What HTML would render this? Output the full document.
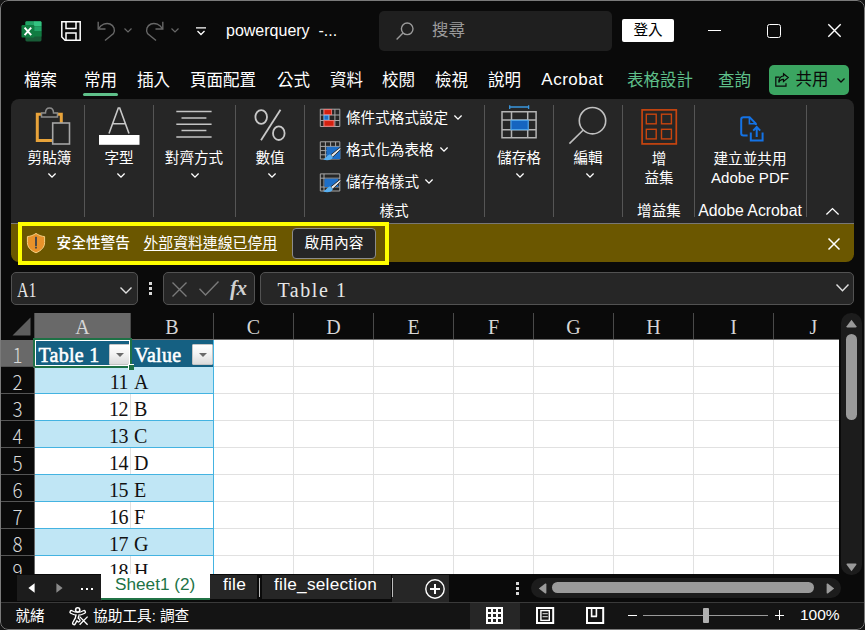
<!DOCTYPE html>
<html lang="zh-Hant">
<head>
<meta charset="utf-8">
<title>powerquery - Excel</title>
<style>
*{box-sizing:border-box;margin:0;padding:0}
html,body{width:865px;height:630px;overflow:hidden;background:#161616}
body{font-family:"Liberation Sans","Noto Sans CJK TC",sans-serif;color:#fff;position:relative}
#win{position:absolute;left:0;top:0;width:864.5px;height:629.5px;background:#0a0a0a;border-radius:8px;overflow:hidden}
#winb{position:absolute;left:0;top:0;width:864.5px;height:629.5px;border:1px solid #7a7a7a;border-radius:8px;pointer-events:none;z-index:50}
.a{position:absolute}
.t{position:absolute;white-space:nowrap;line-height:1}
svg{position:absolute;overflow:visible}
/* tabs */
.tab{position:absolute;top:70px;font-size:16.5px;line-height:20px;white-space:nowrap;color:#fff}
.tab.g{color:#5fc08a}
/* ribbon */
#ribbon{position:absolute;left:11px;top:99px;width:843px;height:124px;background:#262626;border-radius:8px 8px 0 0}
.sep{position:absolute;top:105px;width:1px;height:112px;background:#555}
.rl{position:absolute;font-size:14.6px;line-height:18px;white-space:nowrap;color:#fff;text-align:center}
.chev{position:absolute;width:8px;height:5px}
/* message bar */
#msg{position:absolute;left:11px;top:223px;width:843px;height:39px;background:#6b5700;border-top:1px solid #777;border-radius:0 0 8px 8px}
/* grid */
.ser{font-family:"Liberation Serif","Noto Serif CJK SC",serif}
.colh{position:absolute;top:313px;height:26px;font-size:20px;line-height:29.5px;text-align:center;color:#d6d6d6}
.rowh{position:absolute;left:1px;width:33px;height:27px;font-size:20px;line-height:31px;text-align:center;color:#dadada}
.cell{position:absolute;height:27px;font-size:20px;line-height:31.5px;color:#111;white-space:nowrap}
.sx{display:inline-block;transform:scaleY(1.08);transform-origin:50% 60%}
</style>
</head>
<body>
<div id="win">

<!-- ===== title bar ===== -->
<div id="titlebar">
  <!-- excel icon -->
  <svg class="a" style="left:20.5px;top:20.5px" width="21" height="21" viewBox="0 0 21 21">
    <rect x="4.4" y="0.2" width="16.1" height="20.3" rx="1.4" fill="#185c37"/>
    <path d="M5.8 0.2 H12.5 V5.3 H4.4 V1.6 Q4.4 0.2 5.8 0.2 Z" fill="#21a366"/>
    <path d="M12.500 0.2 H19.1 Q20.5 0.2 20.5 1.6 V5.3 H12.5 Z" fill="#33c481"/>
    <rect x="4.4" y="5.3" width="8.1" height="5.1" fill="#107c41"/>
    <rect x="12.5" y="5.3" width="8" height="5.1" fill="#21a366"/>
    <rect x="4.4" y="10.4" width="8.1" height="5.1" fill="#185c37"/>
    <rect x="12.5" y="10.4" width="8" height="5.1" fill="#107c41"/>
    <rect x="0.5" y="4.1" width="12.9" height="12.5" rx="1.2" fill="#107c41"/>
    <path d="M3.6 6.6 L10.2 14.2 M10.2 6.6 L3.6 14.2" stroke="#fff" stroke-width="1.9" fill="none"/>
  </svg>
  <!-- save -->
  <svg class="a" style="left:61px;top:21px" width="20" height="20" viewBox="0 0 20 20" fill="none" stroke="#fff" stroke-width="1.5">
    <path d="M0.8 0.8 H19.2 V19.2 H4 L0.8 16 Z"/>
    <path d="M5 0.8 V7.5 H15 V0.8"/>
    <path d="M5 19 V12 H15 V19"/>
  </svg>
  <!-- undo -->
  <svg class="a" style="left:97px;top:21px" width="19" height="20" viewBox="0 0 19 20" fill="none" stroke="#676767" stroke-width="1.4">
    <path d="M1.2 0.8 V8 H8.5"/>
    <path d="M1.5 7.8 C4 3.5 9 1.5 13 3 C17 4.8 18.5 9 16.5 12.5 L8 19.5"/>
  </svg>
  <svg class="a" style="left:124px;top:28px" width="8" height="5" viewBox="0 0 8 5" fill="none" stroke="#676767" stroke-width="1.2"><path d="M0.5 0.5 L4 4 L7.5 0.5"/></svg>
  <!-- redo -->
  <svg class="a" style="left:145px;top:21px" width="19" height="20" viewBox="0 0 19 20" fill="none" stroke="#676767" stroke-width="1.4">
    <path d="M17.8 0.8 V8 H10.5"/>
    <path d="M17.5 7.8 C15 3.5 10 1.5 6 3 C2 4.8 0.5 9 2.5 12.5 L11 19.5"/>
  </svg>
  <svg class="a" style="left:171px;top:28px" width="8" height="5" viewBox="0 0 8 5" fill="none" stroke="#676767" stroke-width="1.2"><path d="M0.5 0.5 L4 4 L7.5 0.5"/></svg>
  <!-- customize qat -->
  <svg class="a" style="left:196px;top:27px" width="10" height="9" viewBox="0 0 10 9" fill="none" stroke="#fff" stroke-width="1.3"><path d="M0 0.8 H10"/><path d="M1.5 4 L5 7.5 L8.5 4"/></svg>
  <div class="t" style="left:226px;top:21px;font-size:16px;line-height:20px;color:#fff">powerquery&nbsp; -...</div>
  <!-- search -->
  <div class="a" style="left:379px;top:11px;width:233px;height:39.5px;background:#1f1f1f;border-radius:5px"></div>
  <svg class="a" style="left:396px;top:22px" width="18" height="18" viewBox="0 0 18 18" fill="none" stroke="#9a9a9a" stroke-width="1.4"><circle cx="11.2" cy="6.8" r="5.8"/><path d="M7 11 L0.6 17.4"/></svg>
  <div class="t" style="left:432px;top:20px;font-size:16.5px;line-height:20px;color:#9a9a9a">搜尋</div>
  <!-- sign in -->
  <div class="a" style="left:622px;top:19px;width:52px;height:23px;background:#fff;border-radius:2px;color:#000;font-size:14.6px;line-height:23px;text-align:center">登入</div>
  <!-- window controls -->
  <div class="a" style="left:708px;top:30px;width:13px;height:1.4px;background:#fff"></div>
  <div class="a" style="left:767px;top:24px;width:14px;height:14px;border:1.5px solid #fff;border-radius:2.5px"></div>
  <svg class="a" style="left:828px;top:24px" width="13" height="13" viewBox="0 0 13 13" fill="none" stroke="#fff" stroke-width="1.4"><path d="M0.3 0.3 L12.7 12.7 M12.7 0.3 L0.3 12.7"/></svg>
</div>

<!-- ===== tabs ===== -->
<div id="tabs">
  <div class="tab" style="left:24px">檔案</div>
  <div class="tab" style="left:84px">常用</div>
  <div class="a" style="left:83px;top:93px;width:35px;height:3px;background:#5fc08a;border-radius:1.5px"></div>
  <div class="tab" style="left:137px">插入</div>
  <div class="tab" style="left:190px">頁面配置</div>
  <div class="tab" style="left:277px">公式</div>
  <div class="tab" style="left:330px">資料</div>
  <div class="tab" style="left:382px">校閱</div>
  <div class="tab" style="left:435px">檢視</div>
  <div class="tab" style="left:488px">說明</div>
  <div class="tab" style="left:541.3px;font-size:17px;letter-spacing:.5px">Acrobat</div>
  <div class="tab g" style="left:627px">表格設計</div>
  <div class="tab g" style="left:718px">查詢</div>
  <div class="a" style="left:769px;top:65px;width:80px;height:30px;background:#3ba561;border-radius:5px"></div>
  <svg class="a" style="left:775px;top:73px" width="14" height="14" viewBox="0 0 14 14" fill="none" stroke="#0a0a0a" stroke-width="1.2"><path d="M4.6 4.2 H0.8 V13.2 H11 V10.2"/><path d="M8.5 0.7 L13.2 4.6 L8.5 8.5 V6.3 C6 6.3 4.5 7.5 3.8 9.5 C3.8 5.5 5.8 3.2 8.5 3 Z"/></svg>
  <div class="tab" style="left:795.5px;top:69px;color:#0a0a0a">共用</div>
  <svg class="a" style="left:836.5px;top:78px" width="8" height="5" viewBox="0 0 8 5" fill="none" stroke="#0a0a0a" stroke-width="1.3"><path d="M0.5 0.5 L4 4 L7.5 0.5"/></svg>
</div>

<!-- ===== ribbon ===== -->
<div id="ribbon"></div>
<div id="ribbonc">

  <!-- clipboard -->
  <svg class="a" style="left:35px;top:107px" width="36" height="38" viewBox="0 0 36 38" fill="none">
    <path d="M17 7.3 H2.3 V33.6 H17" stroke="#e8a33a" stroke-width="3"/>
    <path d="M20 7.3 H26.3 V16" stroke="#e8a33a" stroke-width="3"/>
    <path d="M6.5 10 V6 H10.5 C10.5 -0.8 18.5 -0.8 18.5 6 H22.5 V10 Z" fill="#262626" stroke="#8c8c8c" stroke-width="1.5"/>
    <rect x="17.7" y="16" width="16.8" height="21" fill="#262626" stroke="#a6a6a6" stroke-width="1.6"/>
  </svg>
  <div class="rl" style="left:20px;top:148.5px;width:59px">剪貼簿</div>
  <svg class="a" style="left:47.5px;top:173px" width="8" height="5" viewBox="0 0 8 5" fill="none" stroke="#fff" stroke-width="1.3"><path d="M0.4 0.5 L4 4.1 L7.6 0.5"/></svg>
  <!-- font -->
  <svg class="a" style="left:98px;top:107px" width="42" height="38" viewBox="0 0 42 38" fill="none">
    <path d="M11 26.5 L20.3 1 H21.7 L31 26.5 M14.8 16.7 H27.2" stroke="#c8c8c8" stroke-width="1.6"/>
    <rect x="1" y="28" width="40.5" height="9.8" fill="#fff"/>
  </svg>
  <div class="rl" style="left:89px;top:148.5px;width:60px">字型</div>
  <svg class="a" style="left:116.7px;top:173px" width="8" height="5" viewBox="0 0 8 5" fill="none" stroke="#fff" stroke-width="1.3"><path d="M0.4 0.5 L4 4.1 L7.6 0.5"/></svg>
  <!-- alignment -->
  <svg class="a" style="left:176px;top:110px" width="36" height="29" viewBox="0 0 36 29" fill="none" stroke="#c4c4c4" stroke-width="1.5">
    <path d="M0.3 1.5 H35.6 M5.5 8 H30.4 M0.3 14.3 H35.6 M5.5 20.6 H30.4 M0.3 27 H35.6"/>
  </svg>
  <div class="rl" style="left:159px;top:148.5px;width:70px">對齊方式</div>
  <svg class="a" style="left:191.3px;top:173px" width="8" height="5" viewBox="0 0 8 5" fill="none" stroke="#fff" stroke-width="1.3"><path d="M0.4 0.5 L4 4.1 L7.6 0.5"/></svg>
  <!-- number -->
  <svg class="a" style="left:254px;top:109px" width="32" height="32" viewBox="0 0 32 32" fill="none" stroke="#c8c8c8" stroke-width="1.8">
    <ellipse cx="7.2" cy="8" rx="5.8" ry="6.8"/><ellipse cx="24.8" cy="24.2" rx="5.8" ry="6.8"/><path d="M26.5 0.8 L7 31.2"/>
  </svg>
  <div class="rl" style="left:240px;top:148.5px;width:60px">數值</div>
  <svg class="a" style="left:267.5px;top:173px" width="8" height="5" viewBox="0 0 8 5" fill="none" stroke="#fff" stroke-width="1.3"><path d="M0.4 0.5 L4 4.1 L7.6 0.5"/></svg>
  <!-- styles group -->
  <svg class="a" style="left:319px;top:108px" width="22" height="20" viewBox="0 0 22 20" fill="none">
    <path d="M1.3 1.2 H20.8 V18.5 H1.3 Z M5.2 1.2 V18.5 M10.1 1.2 V18.5 M15.9 1.2 V18.5 M1.3 7 H20.8 M1.3 12.5 H20.8" stroke="#a8a8a8" stroke-width="1"/>
    <rect x="5" y="1.6" width="7.6" height="5" fill="#d4210f" stroke="#f07a78" stroke-width="0.9"/>
    <rect x="5" y="7.3" width="4.6" height="4.8" fill="#1e6fc8" stroke="#6ab0ee" stroke-width="0.9"/>
    <rect x="5" y="12.6" width="10" height="5.6" fill="#d4210f" stroke="#f07a78" stroke-width="0.9"/>
  </svg>
  <div class="rl" style="left:346px;top:108.5px;text-align:left">條件式格式設定</div>
  <svg class="a" style="left:454.4px;top:115px" width="8" height="5" viewBox="0 0 8 5" fill="none" stroke="#fff" stroke-width="1.3"><path d="M0.4 0.5 L4 4.1 L7.6 0.5"/></svg>
  <svg class="a" style="left:319px;top:141px" width="22" height="20" viewBox="0 0 22 20" fill="none">
    <path d="M1.3 0.8 H20.8 V18 H1.3 Z M6.4 0.8 V18 M11.6 0.8 V18 M16.6 0.8 V18 M1.3 5.4 H20.8 M1.3 9.6 H20.8 M1.3 13.8 H20.8" stroke="#a8a8a8" stroke-width="1"/>
    <rect x="7.4" y="5.8" width="13.9" height="12.2" fill="#1e6fc8"/>
    <path d="M21.3 6.2 L11.6 14 L13.6 16.2 L22.2 8 Z" fill="#e6e6e6" stroke="#262626" stroke-width="0.9"/>
    <path d="M11.4 13.6 C8.5 13.6 8.2 16.2 4.3 18.6 C8.5 20 13 19 13.8 16.2 Z" fill="#58b0f2"/>
  </svg>
  <div class="rl" style="left:346px;top:140.5px;text-align:left">格式化為表格</div>
  <svg class="a" style="left:439.5px;top:147px" width="8" height="5" viewBox="0 0 8 5" fill="none" stroke="#fff" stroke-width="1.3"><path d="M0.4 0.5 L4 4.1 L7.6 0.5"/></svg>
  <svg class="a" style="left:319px;top:172.5px" width="22" height="20" viewBox="0 0 22 20" fill="none">
    <path d="M1.3 0.9 H20.8 V18 H1.3 Z M5 0.9 V18 M1.3 5.2 H20.8 M1.3 14 H20.8" stroke="#a8a8a8" stroke-width="1"/>
    <rect x="5.5" y="5.7" width="13.8" height="8.3" fill="#1e6fc8"/>
    <path d="M21.3 6.2 L11.6 14 L13.6 16.2 L22.2 8 Z" fill="#e6e6e6" stroke="#262626" stroke-width="0.9"/>
    <path d="M11.4 13.6 C8.5 13.6 8.2 16.2 4.3 18.6 C8.5 20 13 19 13.8 16.2 Z" fill="#58b0f2"/>
  </svg>
  <div class="rl" style="left:346px;top:172.5px;text-align:left">儲存格樣式</div>
  <svg class="a" style="left:424.5px;top:179px" width="8" height="5" viewBox="0 0 8 5" fill="none" stroke="#fff" stroke-width="1.3"><path d="M0.4 0.5 L4 4.1 L7.6 0.5"/></svg>
  <div class="rl" style="left:364px;top:202px;width:60px">樣式</div>
  <!-- cells -->
  <svg class="a" style="left:500px;top:104px" width="38" height="36" viewBox="0 0 38 36" fill="none">
    <path d="M2 7.7 H36.1 V33.8 H2 Z M11.5 7.7 V33.8 M27.7 7.7 V33.8 M2 16 H36.1 M2 25.8 H36.1" stroke="#b4b4b4" stroke-width="1.5"/>
    <rect x="11" y="16.4" width="17.2" height="9.2" fill="#1565c0" stroke="#4aa0e6" stroke-width="1.2"/>
    <path d="M9.5 3 H28.8 M9.7 1.2 V5 M28.6 1.2 V5" stroke="#3a96dd" stroke-width="1.3"/>
  </svg>
  <div class="rl" style="left:489px;top:148.5px;width:60px">儲存格</div>
  <svg class="a" style="left:516.3px;top:173px" width="8" height="5" viewBox="0 0 8 5" fill="none" stroke="#fff" stroke-width="1.3"><path d="M0.4 0.5 L4 4.1 L7.6 0.5"/></svg>
  <!-- editing -->
  <svg class="a" style="left:568px;top:106px" width="40" height="39" viewBox="0 0 40 39" fill="none" stroke="#c0c0c0" stroke-width="1.6">
    <circle cx="24.5" cy="14.7" r="13.2"/><path d="M15 24.2 L1.4 37.6"/>
  </svg>
  <div class="rl" style="left:558px;top:148.5px;width:60px">編輯</div>
  <svg class="a" style="left:585.5px;top:173px" width="8" height="5" viewBox="0 0 8 5" fill="none" stroke="#fff" stroke-width="1.3"><path d="M0.4 0.5 L4 4.1 L7.6 0.5"/></svg>
  <!-- add-ins -->
  <svg class="a" style="left:640px;top:108px" width="38" height="37" viewBox="0 0 38 37" fill="none" stroke="#c8450f">
    <rect x="2.1" y="1.9" width="34.2" height="34" stroke-width="1.7"/>
    <rect x="6.3" y="6.2" width="9.900" height="9.6" stroke-width="1.4"/>
    <rect x="21.5" y="6.2" width="9.9" height="9.6" stroke-width="1.4"/>
    <rect x="6.3" y="21.3" width="9.9" height="9.6" stroke-width="1.4"/>
    <rect x="21.5" y="21.3" width="9.9" height="9.6" stroke-width="1.4"/>
  </svg>
  <div class="rl" style="left:629px;top:150px;width:60px">增</div>
  <div class="rl" style="left:629px;top:168.5px;width:60px">益集</div>
  <div class="rl" style="left:629px;top:202px;width:60px">增益集</div>
  <!-- adobe -->
  <svg class="a" style="left:740px;top:115.6px" width="24" height="26" viewBox="0 0 24 26" fill="none" stroke="#1473e6" stroke-width="2">
    <path d="M7.6 19.6 H3.5 Q1.2 19.6 1.2 17.3 V3.6 Q1.2 1.3 3.5 1.3 H9.6 L15.8 7.6 V9"/>
    <path d="M9.4 1.5 V7.8 H15.6" stroke-width="1.6"/>
    <path d="M10.8 16.5 V24.6 H22.6 V16.5"/>
    <path d="M16.7 21 V11.5 M13.2 14.6 L16.7 11 L20.2 14.6"/>
  </svg>
  <div class="rl" style="left:700px;top:150px;width:100px">建立並共用</div>
  <div class="rl" style="left:700px;top:168.5px;width:100px;font-size:15.1px">Adobe PDF</div>
  <div class="rl" style="left:695px;top:202px;width:110px;font-size:15.8px">Adobe Acrobat</div>
  <svg class="a" style="left:825.5px;top:208px" width="13" height="7" viewBox="0 0 13 7" fill="none" stroke="#fff" stroke-width="1.3"><path d="M0.4 6.5 L6.5 0.6 L12.6 6.5"/></svg>
  <div class="sep" style="left:84px"></div>
  <div class="sep" style="left:153px"></div>
  <div class="sep" style="left:235px"></div>
  <div class="sep" style="left:304px"></div>
  <div class="sep" style="left:484px"></div>
  <div class="sep" style="left:553px"></div>
  <div class="sep" style="left:622px"></div>
  <div class="sep" style="left:694px"></div>
  <div class="sep" style="left:806px"></div>
</div>

<!-- ===== message bar ===== -->
<div id="msg"></div>
<div id="msgc">
  <div class="a" style="left:18px;top:222px;width:371px;height:43px;border:4px solid #ffff00"></div>
  <svg class="a" style="left:26px;top:232px" width="20" height="22" viewBox="0 0 20 22">
    <path d="M10 1.4 C12.5 3.2 15.5 4.3 18.6 4.6 V10.5 C18.6 15 15.5 18.6 10 20.8 C4.500 18.6 1.4 15 1.4 10.5 V4.600 C4.5 4.3 7.5 3.2 10 1.4 Z" fill="#e8922a" stroke="#f5cf80" stroke-width="1"/>
    <rect x="9" y="4.8" width="2" height="9.5" fill="#4a4a4a"/><rect x="9" y="15" width="2" height="1.5" fill="#4a4a4a"/>
  </svg>
  <div class="t" style="left:56.5px;top:234px;font-size:14.7px;line-height:18px;font-weight:500">安全性警告</div>
  <div class="t" style="left:143.5px;top:234px;font-size:14.85px;line-height:18px;text-decoration:underline;text-underline-offset:2px;text-decoration-thickness:1px">外部資料連線已停用</div>
  <div class="a" style="left:292px;top:227.5px;width:84px;height:31px;background:#262626;border:1px solid #8c8c8c;border-radius:4px;font-size:14.7px;line-height:29px;text-align:center">啟用內容</div>
  <svg class="a" style="left:828px;top:237.5px" width="12" height="12" viewBox="0 0 12 12" fill="none" stroke="#fff" stroke-width="1.5"><path d="M0.5 0.5 L11.5 11.5 M11.5 0.5 L0.5 11.5"/></svg>
</div>

<!-- ===== formula bar ===== -->
<div id="fbar">
  <div class="a" style="left:11px;top:272px;width:127px;height:33px;background:#262626;border:1px solid #525252;border-radius:5px"></div>
  <div class="t ser" style="left:17px;top:279px;font-size:20px;line-height:22px;color:#e6e6e6"><span class="sx" style="transform:scale(.8,1.08);transform-origin:0 60%">A1</span></div>
  <svg class="a" style="left:120px;top:286.5px" width="12" height="7" viewBox="0 0 12 7" fill="none" stroke="#e0e0e0" stroke-width="1.4"><path d="M0.5 0.5 L6 6 L11.5 0.5"/></svg>
  <div class="a" style="left:149px;top:282px;width:3px;height:3px;background:#d8d8d8"></div>
  <div class="a" style="left:149px;top:287px;width:3px;height:3px;background:#d8d8d8"></div>
  <div class="a" style="left:149px;top:292px;width:3px;height:3px;background:#d8d8d8"></div>
  <div class="a" style="left:163px;top:272px;width:92px;height:33px;background:#262626;border:1px solid #525252;border-radius:5px"></div>
  <svg class="a" style="left:171.5px;top:281.5px" width="15" height="15" viewBox="0 0 15 15" fill="none" stroke="#7a7a7a" stroke-width="1.4"><path d="M0.5 0.5 L14.5 14.5 M14.5 0.5 L0.5 14.5"/></svg>
  <svg class="a" style="left:199px;top:281px" width="20" height="15" viewBox="0 0 20 15" fill="none" stroke="#7a7a7a" stroke-width="1.4"><path d="M0.5 7.8 L6.5 14 L19.5 0.5"/></svg>
  <div class="t" style="left:230px;top:277px;font-family:'Liberation Serif',serif;font-style:italic;font-weight:bold;font-size:21px;line-height:22px;color:#d0d0d0;letter-spacing:-0.5px">fx</div>
  <div class="a" style="left:260px;top:272px;width:594px;height:33px;background:#262626;border:1px solid #525252;border-radius:5px"></div>
  <div class="t ser" style="left:277.5px;top:279px;font-size:20px;line-height:22px;color:#e6e6e6;letter-spacing:1.55px"><span class="sx">Table 1</span></div>
  <svg class="a" style="left:836px;top:283.5px" width="13" height="8" viewBox="0 0 13 8" fill="none" stroke="#e0e0e0" stroke-width="1.4"><path d="M0.5 0.5 L6.5 6.8 L12.5 0.5"/></svg>
</div>

<!-- ===== grid ===== -->
<div id="grid">
<div class="a" style="left:1px;top:313px;width:838px;height:26px;background:#0a0a0a"></div>
<div class="a" style="left:35px;top:340px;width:804px;height:234px;background:#fff"></div>
<svg class="a" style="left:12px;top:317px" width="19" height="19" viewBox="0 0 19 19"><path d="M18.5 0.5 V18.5 H0.5 Z" fill="#5e5e5e"/></svg>
<div class="a" style="left:35px;top:313px;width:96px;height:26px;background:#696969"></div>
<div class="a" style="left:35px;top:338px;width:96px;height:2px;background:#1e7145"></div>
<div class="colh ser" style="left:35px;width:95px"><span class="sx">A</span></div>
<div class="colh ser" style="left:131px;width:82px"><span class="sx">B</span></div>
<div class="colh ser" style="left:214px;width:79px"><span class="sx">C</span></div>
<div class="colh ser" style="left:294px;width:79px"><span class="sx">D</span></div>
<div class="colh ser" style="left:374px;width:79px"><span class="sx">E</span></div>
<div class="colh ser" style="left:454px;width:79px"><span class="sx">F</span></div>
<div class="colh ser" style="left:534px;width:79px"><span class="sx">G</span></div>
<div class="colh ser" style="left:614px;width:79px"><span class="sx">H</span></div>
<div class="colh ser" style="left:694px;width:79px"><span class="sx">I</span></div>
<div class="colh ser" style="left:774px;width:79px"><span class="sx">J</span></div>
<div class="a" style="left:34px;top:313px;width:1px;height:26px;background:#4a4a4a"></div>
<div class="a" style="left:130px;top:313px;width:1px;height:26px;background:#4a4a4a"></div>
<div class="a" style="left:213px;top:313px;width:1px;height:26px;background:#4a4a4a"></div>
<div class="a" style="left:293px;top:313px;width:1px;height:26px;background:#4a4a4a"></div>
<div class="a" style="left:373px;top:313px;width:1px;height:26px;background:#4a4a4a"></div>
<div class="a" style="left:453px;top:313px;width:1px;height:26px;background:#4a4a4a"></div>
<div class="a" style="left:533px;top:313px;width:1px;height:26px;background:#4a4a4a"></div>
<div class="a" style="left:613px;top:313px;width:1px;height:26px;background:#4a4a4a"></div>
<div class="a" style="left:693px;top:313px;width:1px;height:26px;background:#4a4a4a"></div>
<div class="a" style="left:773px;top:313px;width:1px;height:26px;background:#4a4a4a"></div>
<div class="a" style="left:130px;top:340px;width:1px;height:234px;background:#e1e1e1"></div>
<div class="a" style="left:213px;top:340px;width:1px;height:234px;background:#e1e1e1"></div>
<div class="a" style="left:293px;top:340px;width:1px;height:234px;background:#e1e1e1"></div>
<div class="a" style="left:373px;top:340px;width:1px;height:234px;background:#e1e1e1"></div>
<div class="a" style="left:453px;top:340px;width:1px;height:234px;background:#e1e1e1"></div>
<div class="a" style="left:533px;top:340px;width:1px;height:234px;background:#e1e1e1"></div>
<div class="a" style="left:613px;top:340px;width:1px;height:234px;background:#e1e1e1"></div>
<div class="a" style="left:693px;top:340px;width:1px;height:234px;background:#e1e1e1"></div>
<div class="a" style="left:773px;top:340px;width:1px;height:234px;background:#e1e1e1"></div>
<div class="a" style="left:35px;top:366px;width:804px;height:1px;background:#e1e1e1"></div>
<div class="a" style="left:35px;top:393px;width:804px;height:1px;background:#e1e1e1"></div>
<div class="a" style="left:35px;top:420px;width:804px;height:1px;background:#e1e1e1"></div>
<div class="a" style="left:35px;top:447px;width:804px;height:1px;background:#e1e1e1"></div>
<div class="a" style="left:35px;top:474px;width:804px;height:1px;background:#e1e1e1"></div>
<div class="a" style="left:35px;top:501px;width:804px;height:1px;background:#e1e1e1"></div>
<div class="a" style="left:35px;top:528px;width:804px;height:1px;background:#e1e1e1"></div>
<div class="a" style="left:35px;top:555px;width:804px;height:1px;background:#e1e1e1"></div>
<div class="a" style="left:1px;top:340px;width:33px;height:27px;background:#696969"></div>
<div class="a" style="left:33px;top:340px;width:2px;height:27px;background:#1e7145"></div>
<div class="rowh" style="top:340px;font-family:'Noto Sans CJK TC',sans-serif;font-weight:300;font-size:18.8px;line-height:29px"><span class="sx">1</span></div>
<div class="rowh" style="top:367px;font-family:'Noto Sans CJK TC',sans-serif;font-weight:300;font-size:18.8px;line-height:29px"><span class="sx">2</span></div>
<div class="rowh" style="top:394px;font-family:'Noto Sans CJK TC',sans-serif;font-weight:300;font-size:18.8px;line-height:29px"><span class="sx">3</span></div>
<div class="rowh" style="top:421px;font-family:'Noto Sans CJK TC',sans-serif;font-weight:300;font-size:18.8px;line-height:29px"><span class="sx">4</span></div>
<div class="rowh" style="top:448px;font-family:'Noto Sans CJK TC',sans-serif;font-weight:300;font-size:18.8px;line-height:29px"><span class="sx">5</span></div>
<div class="rowh" style="top:475px;font-family:'Noto Sans CJK TC',sans-serif;font-weight:300;font-size:18.8px;line-height:29px"><span class="sx">6</span></div>
<div class="rowh" style="top:502px;font-family:'Noto Sans CJK TC',sans-serif;font-weight:300;font-size:18.8px;line-height:29px"><span class="sx">7</span></div>
<div class="rowh" style="top:529px;font-family:'Noto Sans CJK TC',sans-serif;font-weight:300;font-size:18.8px;line-height:29px"><span class="sx">8</span></div>
<div class="rowh" style="top:556px;font-family:'Noto Sans CJK TC',sans-serif;font-weight:300;font-size:18.8px;line-height:29px"><span class="sx">9</span></div>
<div class="a" style="left:35px;top:340px;width:179px;height:27px;background:#156082"></div>
<div class="a" style="left:35px;top:367px;width:178px;height:26px;background:#c0e6f5"></div>
<div class="a" style="left:35px;top:393px;width:179px;height:1px;background:#44b3e1"></div>
<div class="cell ser" style="left:35px;top:367px;width:93.3px;text-align:right;letter-spacing:-.3px"><span class="sx">11</span></div>
<div class="cell ser" style="left:134px;top:367px"><span class="sx">A</span></div>
<div class="a" style="left:35px;top:420px;width:179px;height:1px;background:#44b3e1"></div>
<div class="cell ser" style="left:35px;top:394px;width:93.3px;text-align:right;letter-spacing:-.3px"><span class="sx">12</span></div>
<div class="cell ser" style="left:134px;top:394px"><span class="sx">B</span></div>
<div class="a" style="left:35px;top:421px;width:178px;height:26px;background:#c0e6f5"></div>
<div class="a" style="left:35px;top:447px;width:179px;height:1px;background:#44b3e1"></div>
<div class="cell ser" style="left:35px;top:421px;width:93.3px;text-align:right;letter-spacing:-.3px"><span class="sx">13</span></div>
<div class="cell ser" style="left:134px;top:421px"><span class="sx">C</span></div>
<div class="a" style="left:35px;top:474px;width:179px;height:1px;background:#44b3e1"></div>
<div class="cell ser" style="left:35px;top:448px;width:93.3px;text-align:right;letter-spacing:-.3px"><span class="sx">14</span></div>
<div class="cell ser" style="left:134px;top:448px"><span class="sx">D</span></div>
<div class="a" style="left:35px;top:475px;width:178px;height:26px;background:#c0e6f5"></div>
<div class="a" style="left:35px;top:501px;width:179px;height:1px;background:#44b3e1"></div>
<div class="cell ser" style="left:35px;top:475px;width:93.3px;text-align:right;letter-spacing:-.3px"><span class="sx">15</span></div>
<div class="cell ser" style="left:134px;top:475px"><span class="sx">E</span></div>
<div class="a" style="left:35px;top:528px;width:179px;height:1px;background:#44b3e1"></div>
<div class="cell ser" style="left:35px;top:502px;width:93.3px;text-align:right;letter-spacing:-.3px"><span class="sx">16</span></div>
<div class="cell ser" style="left:134px;top:502px"><span class="sx">F</span></div>
<div class="a" style="left:35px;top:529px;width:178px;height:26px;background:#c0e6f5"></div>
<div class="a" style="left:35px;top:555px;width:179px;height:1px;background:#44b3e1"></div>
<div class="cell ser" style="left:35px;top:529px;width:93.3px;text-align:right;letter-spacing:-.3px"><span class="sx">17</span></div>
<div class="cell ser" style="left:134px;top:529px"><span class="sx">G</span></div>
<div class="a" style="left:35px;top:582px;width:179px;height:1px;background:#44b3e1"></div>
<div class="cell ser" style="left:35px;top:556px;width:93.3px;text-align:right;letter-spacing:-.3px"><span class="sx">18</span></div>
<div class="cell ser" style="left:134px;top:556px"><span class="sx">H</span></div>
<div class="a" style="left:213px;top:340px;width:1px;height:234px;background:#44b3e1"></div>
<div class="cell ser" style="left:38.5px;top:340px;color:#fff;-webkit-text-stroke:.55px #fff;font-size:20px;line-height:30.6px;letter-spacing:.25px"><span class="sx">Table 1</span></div>
<div class="cell ser" style="left:134.5px;top:340px;color:#fff;-webkit-text-stroke:.55px #fff;font-size:20px;line-height:30.6px;letter-spacing:.25px"><span class="sx">Value</span></div>
<div class="a" style="left:109px;top:344px;width:21px;height:21px;background:linear-gradient(#ffffff,#f4f4f4 45%,#dcdcdc);border:1px solid #c4c4c4;border-radius:1px"></div>
<svg class="a" style="left:115.5px;top:353px" width="8" height="4" viewBox="0 0 8 4"><path d="M0 0 H8 L4 4 Z" fill="#6a6a6a"/></svg>
<div class="a" style="left:192px;top:344px;width:21px;height:21px;background:linear-gradient(#ffffff,#f4f4f4 45%,#dcdcdc);border:1px solid #c4c4c4;border-radius:1px"></div>
<svg class="a" style="left:198.5px;top:353px" width="8" height="4" viewBox="0 0 8 4"><path d="M0 0 H8 L4 4 Z" fill="#6a6a6a"/></svg>
<div class="a" style="left:33px;top:338px;width:99px;height:30px;border:2px solid #1e7145;box-shadow:inset 0 0 0 1px #fff"></div>
<div class="a" style="left:127.5px;top:363.5px;width:6px;height:6px;background:#1e7145;border:1px solid #fff;border-right:0;border-bottom:0"></div>
<div class="a" style="left:0;top:574px;width:865px;height:56px;background:#0a0a0a"></div>
<div class="a" style="left:839px;top:313px;width:26px;height:262px;background:#0a0a0a"></div>
<div class="a" style="left:841px;top:313px;width:21px;height:262px;background:#1c1c1c;border-radius:10px"></div>
<svg class="a" style="left:846px;top:319px" width="11" height="9" viewBox="0 0 11 9"><path d="M5.5 0.8 L10.4 7.2 Q10.8 8.4 9.6 8.4 H1.4 Q0.2 8.4 0.6 7.2 Z" fill="#9a9a9a"/></svg>
<div class="a" style="left:846px;top:333.5px;width:11px;height:86px;background:#9a9a9a;border-radius:5.5px"></div>
<svg class="a" style="left:846px;top:563px" width="11" height="9" viewBox="0 0 11 9"><path d="M5.5 8.2 L10.4 1.8 Q10.8 0.6 9.6 0.6 H1.4 Q0.2 0.6 0.6 1.8 Z" fill="#9a9a9a"/></svg>
</div>

<div class="a" style="left:132px;top:339px;width:707px;height:1px;background:#6e6e6e"></div>
<div class="a" style="left:1px;top:393px;width:33px;height:1px;background:#555"></div>
<div class="a" style="left:1px;top:420px;width:33px;height:1px;background:#555"></div>
<div class="a" style="left:1px;top:447px;width:33px;height:1px;background:#555"></div>
<div class="a" style="left:1px;top:474px;width:33px;height:1px;background:#555"></div>
<div class="a" style="left:1px;top:501px;width:33px;height:1px;background:#555"></div>
<div class="a" style="left:1px;top:528px;width:33px;height:1px;background:#555"></div>
<div class="a" style="left:1px;top:555px;width:33px;height:1px;background:#555"></div>
<div class="a" style="left:34px;top:367px;width:1px;height:207px;background:#686868"></div>
<div class="a" style="left:1px;top:366px;width:33px;height:1px;background:#555"></div>
<!-- ===== sheet tabs ===== -->
<div id="sheettabs">
  <div class="a" style="left:17px;top:575px;width:85px;height:26px;background:#1c1c1c"></div>
  <svg class="a" style="left:28px;top:583px" width="7" height="10" viewBox="0 0 7 10"><path d="M6.6 0.3 V9.7 L0.4 5 Z" fill="#fff"/></svg>
  <svg class="a" style="left:56px;top:583px" width="7" height="10" viewBox="0 0 7 10"><path d="M0.4 0.3 V9.7 L6.6 5 Z" fill="#8a8a8a"/></svg>
  <div class="a" style="left:81px;top:588px;width:2px;height:2px;background:#fff"></div>
  <div class="a" style="left:86px;top:588px;width:2px;height:2px;background:#fff"></div>
  <div class="a" style="left:91px;top:588px;width:2px;height:2px;background:#fff"></div>
  <div class="a" style="left:101px;top:574px;width:109px;height:24px;background:#fff"></div>
  <div class="a" style="left:101px;top:597.5px;width:109px;height:2px;background:#217346"></div>
  <div class="t" style="left:115px;top:574px;font-size:17.2px;line-height:20px;color:#217346">Sheet1 (2)</div>
  <div class="a" style="left:210px;top:575px;width:239px;height:27px;background:#262626"></div>
  <div class="a" style="left:257.3px;top:575px;width:4.4px;height:27px;background:#0a0a0a"></div>
  <div class="a" style="left:210px;top:599px;width:182px;height:3px;background:#0a0a0a"></div>
  <div class="a" style="left:259px;top:578px;width:1px;height:19px;background:#bdbdbd"></div>
  <div class="a" style="left:391px;top:575px;width:1px;height:24px;background:#0a0a0a"></div>
  <div class="a" style="left:392px;top:578px;width:1px;height:19px;background:#bdbdbd"></div>
  <div class="t" style="left:223px;top:574px;font-size:17.4px;line-height:20px;color:#fff;letter-spacing:.2px">file</div>
  <div class="t" style="left:274px;top:574px;font-size:17.2px;line-height:20px;color:#fff;letter-spacing:.27px">file_selection</div>
  <svg class="a" style="left:425px;top:579px" width="20" height="20" viewBox="0 0 20 20" fill="none" stroke="#fff" stroke-width="1.4"><circle cx="10" cy="10" r="9.2"/><path d="M10 5 V15 M5 10 H15" stroke-width="2"/></svg>
  <div class="a" style="left:515.5px;top:582px;width:3px;height:3px;background:#d8d8d8"></div>
  <div class="a" style="left:515.5px;top:587px;width:3px;height:3px;background:#d8d8d8"></div>
  <div class="a" style="left:515.5px;top:592px;width:3px;height:3px;background:#d8d8d8"></div>
  <div class="a" style="left:531px;top:578px;width:310px;height:20px;background:#1c1c1c;border-radius:10px"></div>
  <svg class="a" style="left:537.5px;top:582.5px" width="9" height="11" viewBox="0 0 9 11"><path d="M0.8 5.5 L7.2 0.6 Q8.4 0.2 8.4 1.4 V9.6 Q8.4 10.8 7.2 10.4 Z" fill="#9a9a9a"/></svg>
  <div class="a" style="left:552px;top:582px;width:262px;height:11px;background:#9a9a9a;border-radius:5.5px"></div>
  <svg class="a" style="left:826px;top:582.5px" width="9" height="11" viewBox="0 0 9 11"><path d="M8.2 5.5 L1.8 0.6 Q0.6 0.2 0.6 1.4 V9.6 Q0.6 10.8 1.8 10.4 Z" fill="#9a9a9a"/></svg>
</div>

<!-- ===== status bar ===== -->
<div id="status">
  <div class="a" style="left:0;top:602px;width:865px;height:28px;background:#141414;border-top:1px solid #3a3a3a"></div>
  <div class="a" style="left:470px;top:603px;width:50px;height:27px;background:#262626"></div>
  <div class="t" style="left:15.5px;top:607px;font-size:14.5px;line-height:18px">就緒</div>
  <svg class="a" style="left:69px;top:606px" width="20" height="20" viewBox="0 0 20 20" fill="none" stroke-linecap="round" stroke-linejoin="round">
    <path d="M2.4 6 Q8.7 9.6 15 6 M8.7 8.2 L7.6 12.5 L5 17.2 M7.6 12.5 L9.6 14.4" stroke="#fff" stroke-width="4.2"/>
    <circle cx="8.7" cy="3.9" r="2.9" fill="#fff" stroke="none"/>
    <path d="M2.4 6 Q8.7 9.6 15 6 M8.7 8.2 L7.6 12.5 L5 17.2 M7.6 12.5 L9.6 14.4" stroke="#141414" stroke-width="1.5"/>
    <circle cx="8.7" cy="3.9" r="1.3" fill="#141414" stroke="none"/>
    <path d="M10.6 10.6 L18.6 18.8 M18.6 10.6 L10.6 18.8" stroke="#fff" stroke-width="1.3" stroke-linecap="butt"/>
  </svg>
  <div class="t" style="left:93px;top:607px;font-size:14.7px;line-height:18px">協助工具: 調查</div>
  <svg class="a" style="left:486px;top:607px" width="17" height="17" viewBox="0 0 17 17" fill="none" stroke="#fff" stroke-width="2"><path d="M1 1 H16 V16 H1 Z M6 1 V16 M11 1 V16 M1 6 H16 M1 11 H16"/></svg>
  <svg class="a" style="left:536px;top:607px" width="18" height="17" viewBox="0 0 18 17" fill="none" stroke="#fff"><rect x="1" y="1" width="16.2" height="15" stroke-width="2"/><rect x="4.9" y="3.6" width="8.4" height="9.8" stroke-width="1.4"/><path d="M6.5 6.6 H11.8 M6.5 9.6 H11.8" stroke-width="1.2" stroke="#bbb"/></svg>
  <svg class="a" style="left:586px;top:607px" width="18" height="17" viewBox="0 0 18 17" fill="none" stroke="#fff" stroke-width="2"><rect x="1" y="1" width="16.2" height="15"/><path d="M5.6 1 V9.4 H11 M10.4 1 V9.4" stroke-width="1.6"/></svg>
  <div class="a" style="left:627.5px;top:614.5px;width:9px;height:1.3px;background:#fff"></div>
  <div class="a" style="left:643px;top:614.7px;width:125px;height:1px;background:#9a9a9a"></div>
  <div class="a" style="left:702.5px;top:608px;width:6.5px;height:15px;background:#b0b0b0;border-radius:1px"></div>
  <div class="a" style="left:774.5px;top:614.5px;width:9.5px;height:1.3px;background:#fff"></div>
  <div class="a" style="left:778.6px;top:610.4px;width:1.3px;height:9.5px;background:#fff"></div>
  <div class="t" style="left:800px;top:606px;font-size:15.5px;line-height:18px">100%</div>
</div>

<div id="winb"></div>
</div>
</body>
</html>
